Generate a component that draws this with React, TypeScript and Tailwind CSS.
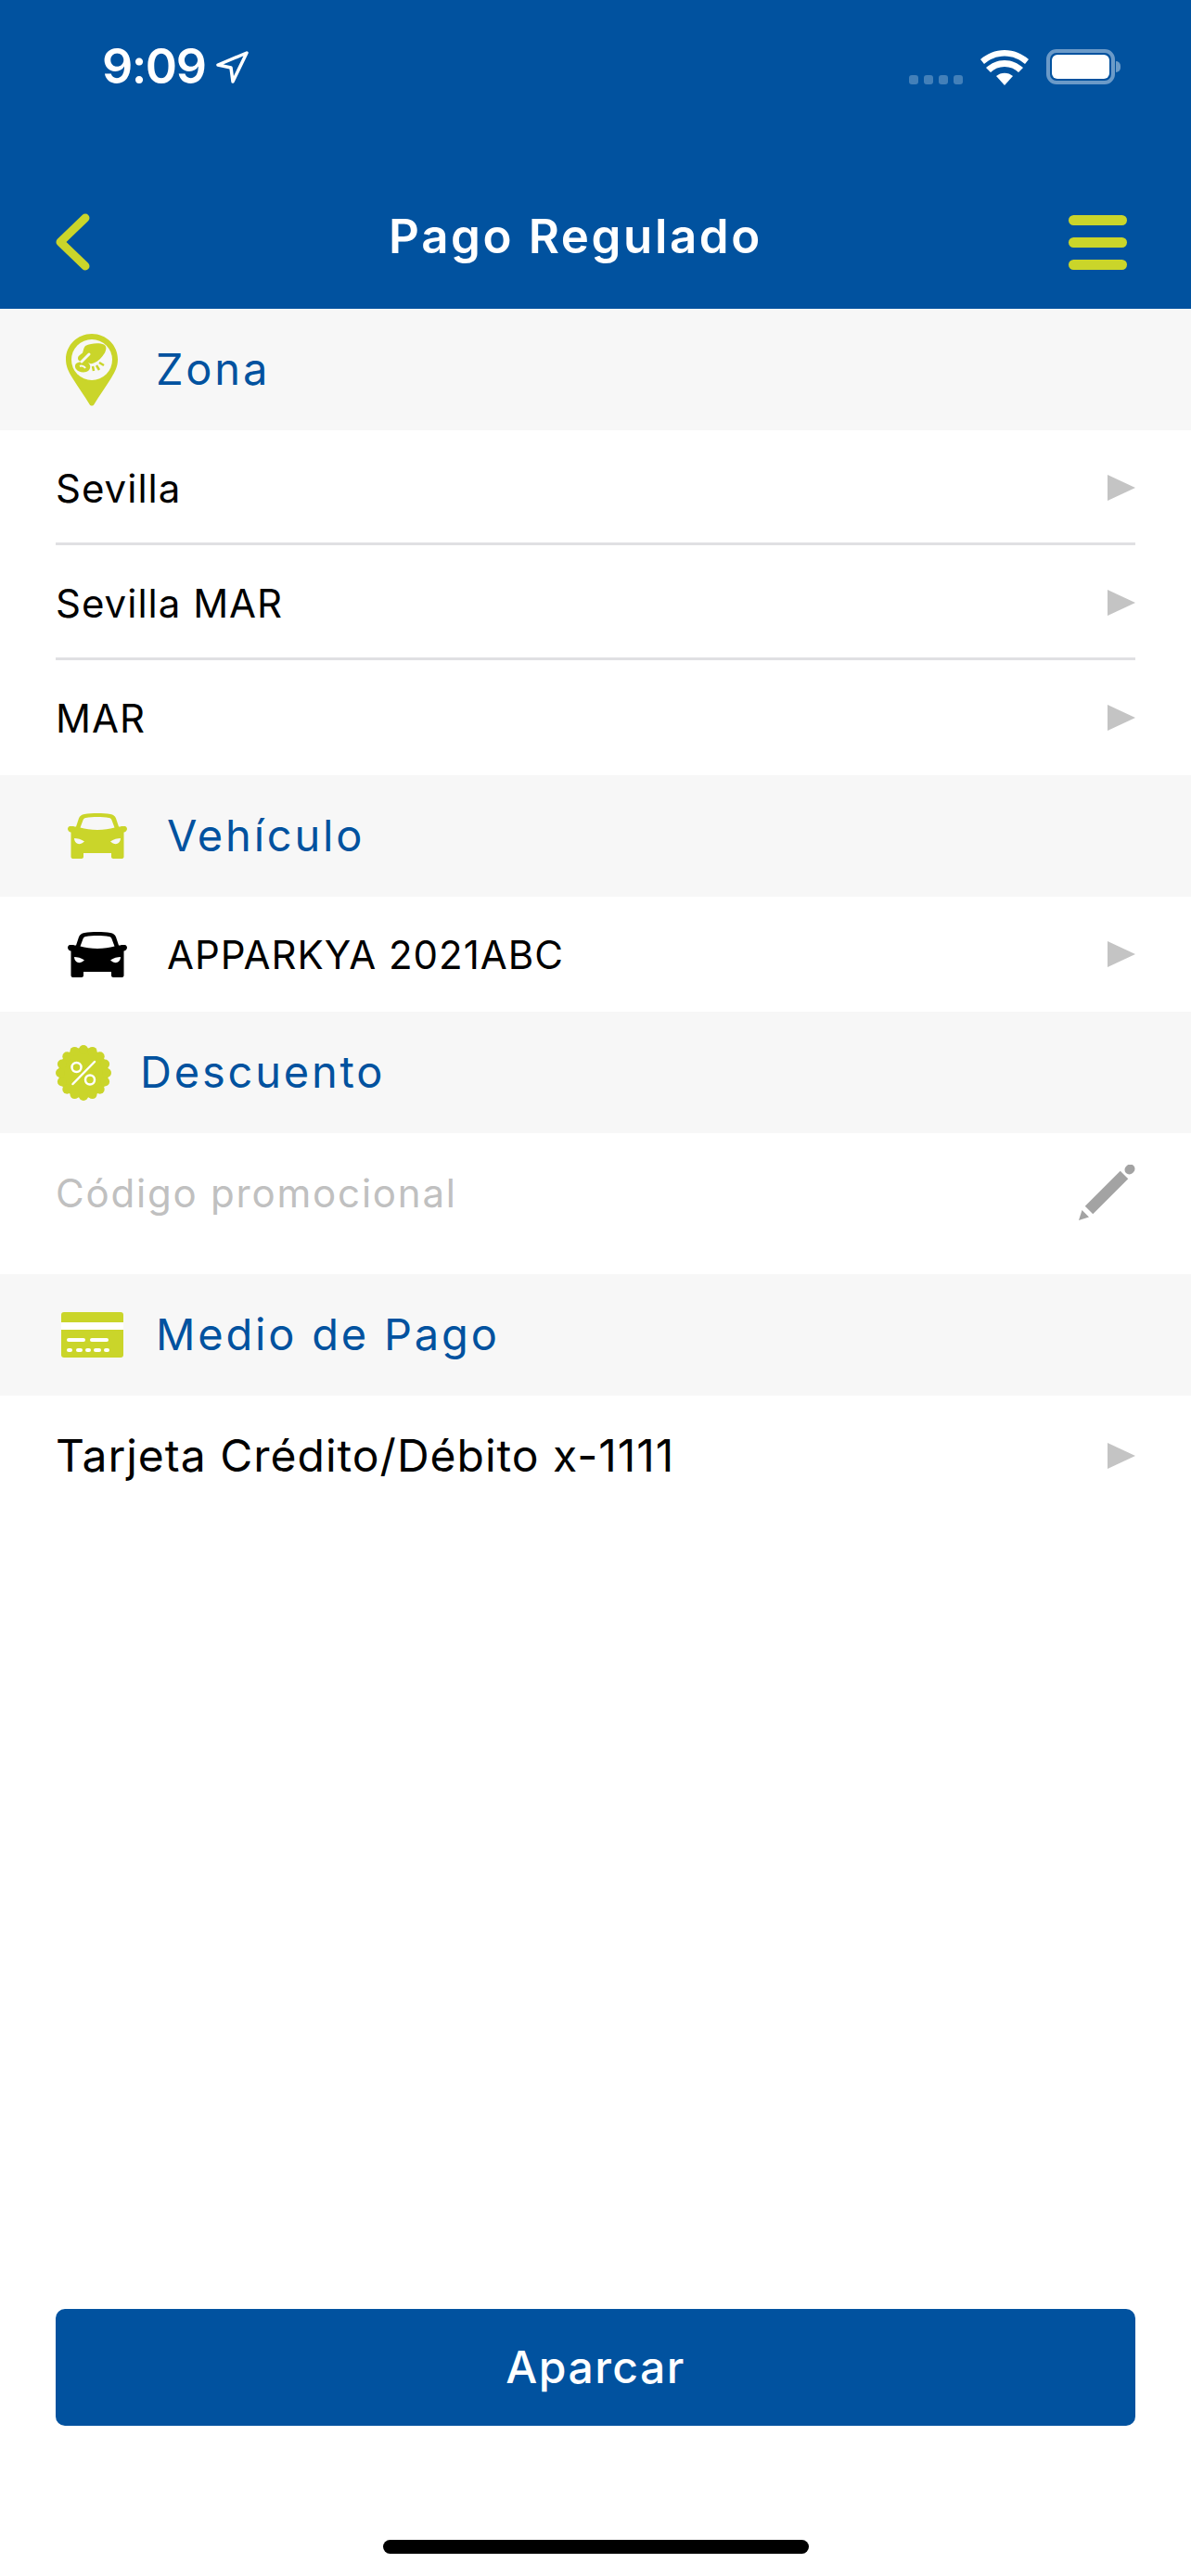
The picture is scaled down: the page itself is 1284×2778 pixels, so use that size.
const font = { fontFamily: 'Inter, "Noto Sans", sans-serif' };

function Arrow() {
  return <div className="w-[30px] h-[28px] bg-[#c4c4c4] [clip-path:polygon(0_0,100%_50%,0_100%)]" />;
}

function PinIcon() {
  return (
    <svg width="56" height="78" viewBox="0 0 56 78" className="text-[#cad52a]">
      <path d="M28 0C12.5 0 0 12.3 0 27.5 0 35 3 41 7 47.5 13 57 20 67 25.5 76c1.2 2 3.8 2 5 0C36 67 43 57 49 47.5 53 41 56 35 56 27.5 56 12.3 43.500 0 28 0Z" fill="currentColor" />
      <circle cx="28" cy="28" r="22" fill="#f7f7f7" />
      <path d="M21 13c6-3 15-3.500 20-1.500 3 1.500 3 5 1 9-3 5-7 9-12 11-2 1-4 1-5 0l-6-1c-3-1-6-1-6-4 0-3 3-4 5-6 1-3 1-5 3-7.500Z" fill="currentColor" />
      <path d="M19 30c3-1 6 1 7 4 1 3-1 6-4 7-4 1-9 0-11-3-2-3-1-6 2-7 2-1 4-1 6-1Z" fill="currentColor" />
      <path d="M15 35c2-1 5 0 6 2" stroke="#f7f7f7" strokeWidth="2" fill="none" />
      <path d="M25 22l-8 8" stroke="#f7f7f7" strokeWidth="3" strokeLinecap="round" />
      <path d="M29 35l1 5M33 34l3 5M36 31l5 3" stroke="currentColor" strokeWidth="2.500" />
    </svg>
  );
}

function CarIcon({ color, light }: { color: string; light: string }) {
  return (
    <svg width="64" height="49" viewBox="0 0 64 49">
      <path
        fill={color}
        fillRule="evenodd"
        d="M32 0c5 0 10 .3 14 1 3 .5 5 2 6 4.500L55 14.500h1c1 0 1.500-.5 2.500-.5h3c1.500 0 2.500 1.500 2.500 3 0 1.500-1.500 3-3 3.500h-.5V47c0 1-1 2-2 2H49c-1 0-2-1-2-2v-4H17v4c0 1-1 2-2 2H5.500c-1 0-2-1-2-2V20.500H3c-1.500-.5-3-2-3-3.500 0-1.500 1-3 2.500-3h3c1 0 1.500.5 2.500.5h1l3-9C13 3 15 1.500 18 1c4-.7 9-1 14-1ZM32 4c-4 0-9 .3-12.500 1-1.500.3-2.500 1-3 2.500L13.500 15.500C19 17 25 18 32 18s13-1 18.500-2.500L47.500 7.500C47 6 46 5.300 44.500 5 41 4.300 36 4 32 4Z"
      />
      <path d="M7 27c3 0 8 1 11 3.500-2 2-5 3-7 2.500-2-.5-4-3-4-6ZM57 27c-3 0-8 1-11 3.500 2 2 5 3 7 2.500 2-.5 4-3 4-6Z" fill={light} />
    </svg>
  );
}

function BadgeIcon() {
  return (
    <svg width="60" height="60" viewBox="0 0 60 60">
      <circle cx="30" cy="30" r="27" fill="#cad52a" />
      {Array.from({ length: 16 }).map((_, i) => (
        <circle
          key={i}
          cx={30 + 25 * Math.cos((i * Math.PI) / 8)}
          cy={30 + 25 * Math.sin((i * Math.PI) / 8)}
          r="5"
          fill="#cad52a"
        />
      ))}
      <circle cx="22.500" cy="24" r="5" fill="none" stroke="#fff" strokeWidth="2.500" />
      <circle cx="37" cy="37.500" r="5" fill="none" stroke="#fff" strokeWidth="2.500" />
      <path d="M42 18 18.500 42" stroke="#fff" strokeWidth="2.500" strokeLinecap="round" />
    </svg>
  );
}

function CardIcon() {
  return (
    <svg width="67" height="49" viewBox="0 0 67 49">
      <rect width="67" height="49" rx="3" fill="#cad52a" />
      <rect y="11" width="67" height="8" fill="#fff" />
      <g fill="#fff">
        <rect x="6" y="28" width="20" height="4" rx="2" />
        <rect x="31" y="28" width="20" height="4" rx="2" />
        <rect x="6" y="39" width="6" height="4" rx="2" />
        <rect x="16" y="39" width="7" height="4" rx="2" />
        <rect x="26" y="39" width="6" height="4" rx="2" />
        <rect x="35" y="39" width="8" height="4" rx="2" />
        <rect x="46" y="39" width="6" height="4" rx="2" />
      </g>
    </svg>
  );
}

function PencilIcon() {
  return (
    <svg width="61" height="60" viewBox="0 0 61 60">
      <path d="M0 60 3.500 49 11 56.500Z" fill="#a3a3a3" />
      <path d="M11 49 49 11" stroke="#a3a3a3" strokeWidth="12" />
      <path d="M54.500 5.500 55.500 4.500" stroke="#a3a3a3" strokeWidth="10" strokeLinecap="round" />
    </svg>
  );
}

function SectionHeader({ icon, label, gap }: { icon: React.ReactNode; label: string; gap: string }) {
  return (
    <div className={`h-[131px] bg-[#f7f7f7] flex items-center ${gap}`}>
      {icon}
      <span className="text-[47px] text-[#01529f] tracking-[2.8px]">{label}</span>
    </div>
  );
}

function Row({ children, border, height = 'h-[124px]' }: { children: React.ReactNode; border?: boolean; height?: string }) {
  return (
    <div className={`mx-[60px] ${height} flex items-center justify-between ${border ? 'shadow-[inset_0_-3px_0_#e0e0e3]' : ''}`}>
      {children}
      <Arrow />
    </div>
  );
}

export default function App() {
  return (
    <div className="min-h-screen w-[1284px] bg-white flex flex-col text-black" style={font}>
      <header className="h-[333px] bg-[#01529f] flex flex-col">
        <div className="h-[200px] flex justify-between pl-[110px] pr-[76px] pt-[46px]">
          <div className="flex items-start gap-[12px]">
            <span className="text-[52px] leading-[52px] font-semibold text-white tracking-[-1.5px]">9:09</span>
            <svg width="36" height="36" viewBox="0 0 36 36" className="mt-[9px]">
              <path d="M33 2 2 15l14 3 2 15Z" fill="none" stroke="#fff" strokeWidth="3.500" strokeLinejoin="round" />
            </svg>
          </div>
          <div className="flex items-start">
            <div className="flex gap-[6px] mt-[35px]">
              <div className="w-[10px] h-[10px] rounded-[3px] bg-[#4380b9]" />
              <div className="w-[10px] h-[10px] rounded-[3px] bg-[#4380b9]" />
              <div className="w-[10px] h-[10px] rounded-[3px] bg-[#4380b9]" />
              <div className="w-[10px] h-[10px] rounded-[3px] bg-[#4380b9]" />
            </div>
            <svg width="52" height="38" viewBox="0 0 52 38" className="ml-[19px] mt-[8px]">
              <path d="M26 38 17 28c5-4.500 13-4.500 18 0Z" fill="#fff" />
              <path d="M26 11c-8 0-14 3-20 8l5 5c4-4 9-6 15-6s11 2 15 6l5-5c-6-5-12-8-20-8Z" fill="#fff" />
              <path d="M26 0C16 0 7 4 0 10l4 5C10 10 17 6.500 26 6.500S42 10 48 15l4-5C45 4 36 0 26 0Z" fill="#fff" />
            </svg>
            <div className="ml-[19px] mt-[7px] flex items-center gap-[1px]">
              <div className="w-[74px] h-[38px] rounded-[11px] border-[4px] border-[#6b9ac8] p-[2px]">
                <div className="w-full h-full rounded-[6px] bg-white" />
              </div>
              <div className="w-[5px] h-[12px] rounded-r-full bg-[#6b9ac8]" />
            </div>
          </div>
        </div>
        <div className="h-[62px] flex items-center justify-between pl-[60px] pr-[69px] mt-[30px]">
          <svg width="37" height="62" viewBox="0 0 37 62">
            <path d="M32 5 5 31l27 26" fill="none" stroke="#cad52a" strokeWidth="9" strokeLinecap="round" strokeLinejoin="round" />
          </svg>
          <span className="text-[51px] leading-[62px] font-semibold text-white tracking-[2.600px] mb-[12px] mr-[8px]">Pago Regulado</span>
          <div className="w-[63px] flex flex-col gap-[13px]">
            <div className="h-[11px] rounded-full bg-[#cad52a]" />
            <div className="h-[11px] rounded-full bg-[#cad52a]" />
            <div className="h-[11px] rounded-full bg-[#cad52a]" />
          </div>
        </div>
      </header>

      <SectionHeader icon={<div className="ml-[71px]"><PinIcon /></div>} label="Zona" gap="gap-[41px]" />
      <Row border><span className="text-[42px] tracking-[1px]">Sevilla</span></Row>
      <Row border><span className="text-[42px] tracking-[1px]">Sevilla MAR</span></Row>
      <Row><span className="text-[42px] tracking-[1px]">MAR</span></Row>

      <SectionHeader icon={<div className="ml-[73px]"><CarIcon color="#cad52a" light="#f7f7f7" /></div>} label="Vehículo" gap="gap-[43px]" />
      <Row>
        <div className="flex items-center gap-[43px] ml-[13px]">
          <CarIcon color="#000" light="#fff" />
          <span className="text-[42px] tracking-[1px]">APPARKYA 2021ABC</span>
        </div>
      </Row>

      <SectionHeader icon={<div className="ml-[60px]"><BadgeIcon /></div>} label="Descuento" gap="gap-[31px]" />
      <div className="mx-[60px] h-[152px] pb-[24px] flex items-center justify-between">
        <span className="text-[42px] tracking-[1.800px] text-[#c0c0c0]">Código promocional</span>
        <PencilIcon />
      </div>

      <SectionHeader icon={<div className="ml-[66px]"><CardIcon /></div>} label="Medio de Pago" gap="gap-[35px]" />
      <Row height="h-[130px]"><span className="text-[48px] tracking-[1px]">Tarjeta Crédito/Débito x-1111</span></Row>

      <div className="mt-auto px-[60px] pb-[24px] flex flex-col items-center">
        <button className="w-full h-[126px] rounded-[10px] bg-[#01529f] text-white text-[48px] font-medium tracking-[1.500px]">Aparcar</button>
        <div className="w-[459px] h-[15px] rounded-full bg-black mt-[123px]" />
      </div>
    </div>
  );
}
